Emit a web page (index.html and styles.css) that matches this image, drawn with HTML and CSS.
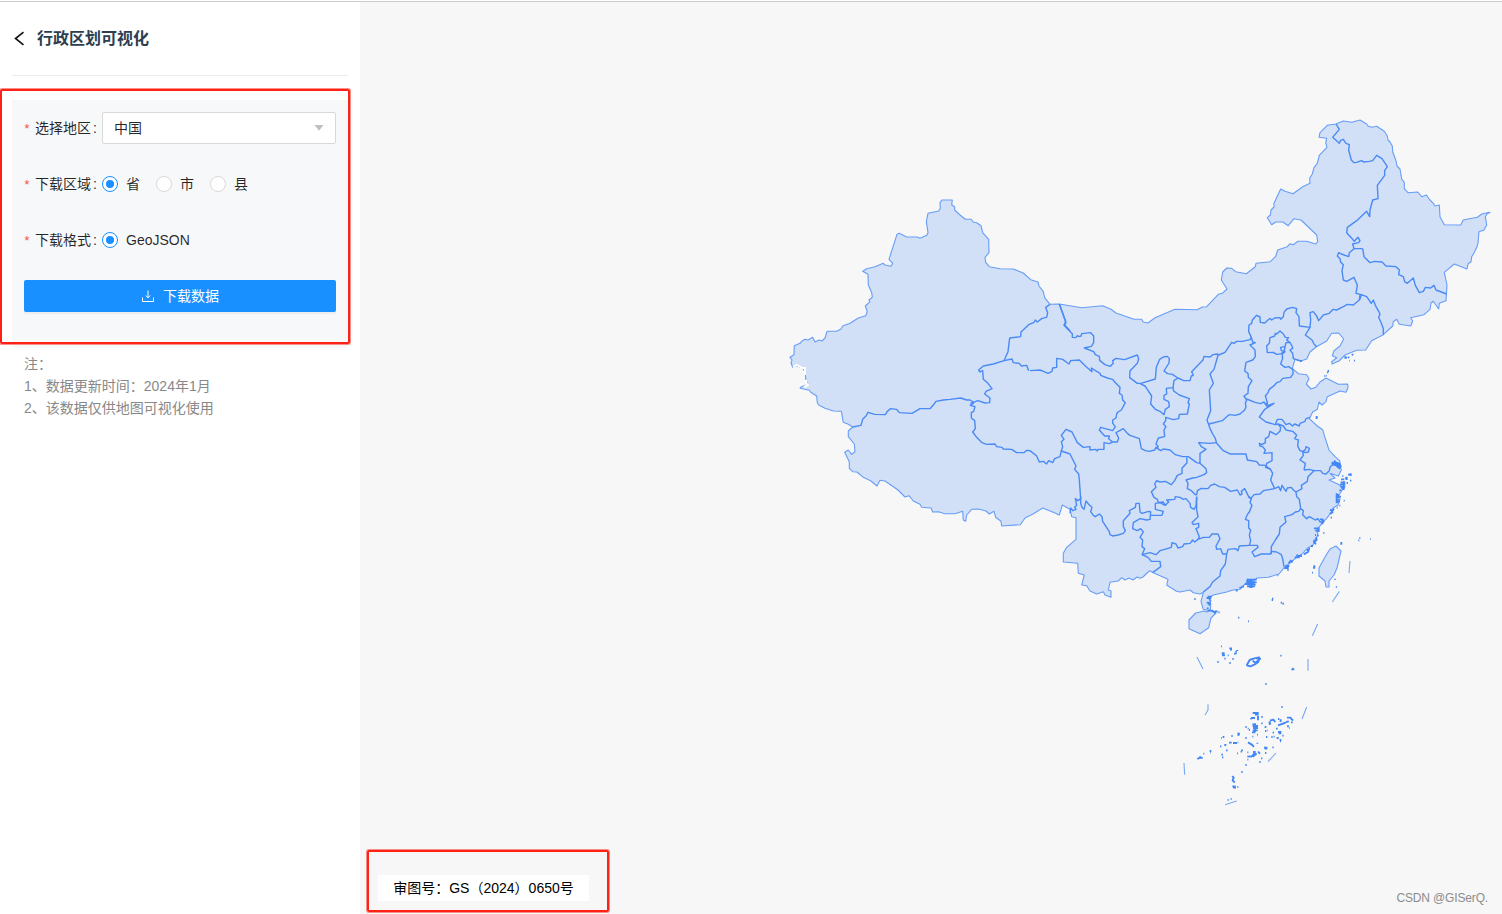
FILE: index.html
```html
<!DOCTYPE html>
<html lang="zh-CN">
<head>
    <meta charset="UTF-8">
    <meta name="viewport" content="width=device-width, initial-scale=1.0">
    <title>行政区划可视化</title>
    <link rel="stylesheet" href="styles.css">
</head>
<body>
    <div class="page">
        <aside class="sidebar">
            <div class="header">
                <svg class="back" width="12" height="16" viewBox="0 0 12 16"><path d="M10.500 1.200L2.500 7.500l8 6.300"/></svg>
                <h1>行政区划可视化</h1>
            </div>

            <form class="panel">
                <div class="row">
                    <label class="name">选择地区</label>
                    <div class="select">
                        <span>中国</span>
                        <svg width="10" height="6" viewBox="0 0 10 6"><path d="M.5 0h9L5 5.800z"/></svg>
                    </div>
                </div>
                <div class="row">
                    <label class="name">下载区域</label>
                    <label class="radio checked"><i></i><span>省</span></label>
                    <label class="radio"><i></i><span>市</span></label>
                    <label class="radio"><i></i><span>县</span></label>
                </div>
                <div class="row">
                    <label class="name">下载格式</label>
                    <label class="radio checked"><i></i><span>GeoJSON</span></label>
                </div>
                <button type="button" class="download">
                    <svg width="14" height="14" viewBox="0 0 14 14"><path d="M7 1.500v7M4.800 6.500L7 8.800l2.200-2.300M1.500 8.500v4h11v-4"/></svg>
                    <span>下载数据</span>
                </button>
            </form>

            <div class="notes">
                <p>注：</p>
                <p>1、数据更新时间：2024年1月</p>
                <p>2、该数据仅供地图可视化使用</p>
            </div>
        </aside>

        <main class="map">
            <svg class="china" width="1142" height="912" viewBox="360 2 1142 912">
                <!-- mainland -->
                <path class="land" d="M852.700 427L848.300 424.300 843.300 422.300 841.300 411.300 833.300 411 825 408.300 819 405.300 817.300 402.700 816.700 396 810.700 392.300 809.300 390.300 800 388.300 801 387 806 385 808 384 806 381 805 371.700 802.700 368.300 797.300 366 792.700 367.300 791 362.700 792 360 790 357.300 794 354.700 794.300 345.700 800 343.300 802 341 805 339.300 808 340 812.700 337.300 815 342 819 340 822 341 825 338 827 331.300 836.700 331.300 841 329 842.700 326 850 323.300 858.300 318 865.700 315.700 867.300 311.700 865.300 306 870 301.700 869 300 872.300 297.300 871.700 292.700 868.300 285 868 274.300 862.700 271.300 866.700 268.700 875 266.700 883.300 263.300 885 265 891 266.300 892.700 263.300 889 259.300 897 234.300 899.300 233.300 906.700 237 917.300 237 920 238.300 926.700 235.300 928 232.700 926.300 221.700 928 213.300 938.700 211 940.300 208.300 940 202.700 942 200 952.300 200 951.700 204.700 954.700 207 954.700 210 960 215 965.300 219.300 971.300 219.300 973 222 976.700 222.700 981 225.700 982.700 232.700 988.700 239.300 989 252.700 985 257.300 985.700 262.300 989.300 266.700 1000 268.700 1013.300 269 1023.300 273 1030.700 279.700 1038 282 1039 286 1043.300 291.700 1044.700 297.700 1050 304.300 1059.300 304 1081.700 307.700 1102.700 305.700 1111 309.300 1116 313 1134 319.300 1141.700 319.300 1143.300 322 1148 323 1155 317.700 1175 309.300 1197.300 309.700 1202.300 307 1206.700 306.700 1218.300 294.300 1222.300 293.300 1227 289 1221.300 280 1222.700 272 1226.700 268 1231.700 268.300 1235.700 271.700 1246.300 273.700 1255.300 266.700 1256 263.300 1270.300 261.700 1275.700 256.300 1277.700 250 1287.300 246.700 1290 243.700 1293.300 244.700 1298 241.300 1306.700 241.300 1315.700 244 1317.700 241.700 1316.700 235 1301 220 1294 218.700 1288.300 225.700 1282.700 222 1275.700 222 1271.700 224.700 1267.300 217.700 1270.300 215 1271 210 1274 207 1274 203.300 1280.700 189 1285 191.300 1293 193.700 1302.700 186.700 1310 183.300 1309.700 178.300 1312.300 174 1314 167.700 1317.300 163.300 1319.300 155.300 1327 147.300 1325.700 142.700 1326.700 138.300 1319 137.300 1320 132.700 1327.300 125.300 1336 124 1343.300 121 1351.700 122.300 1360 120 1366.700 124 1368 126 1371.700 127.300 1376.700 126.300 1384.300 131.300 1387.300 136 1388 140 1390 142 1392.300 146 1392.700 151.700 1396 160.700 1397 166 1400 169 1401.700 179 1404.300 182.300 1404.300 188.700 1408 192.700 1417.700 192 1421.700 196.700 1426.300 195 1430 200 1433.300 203.300 1435 206 1439.300 205 1440 216.700 1444.300 224.700 1460.700 225 1463.300 220 1468 219 1477.300 217.300 1482.300 213.700 1490 212.300 1487 214 1485.300 216.700 1486.700 225 1484 230 1479 231.700 1478 243 1477 246.700 1474 253 1471.700 256.700 1471 261.700 1468 264 1467 269 1454.300 264 1444.300 272.300 1447 285 1446 300.700 1439.300 303.300 1438.700 309 1433.300 301.300 1431 303 1430 309.300 1424 314.700 1410.700 317.700 1412.700 321 1410.700 326 1399.300 324.300 1396.700 319.300 1393.300 321.700 1392.700 326 1383.300 334.700 1371.700 340.700 1365.700 350 1356.700 350.300 1345 355 1339 361 1332 364 1331.700 361.700 1336.700 357.700 1332.300 355.700 1334 350.700 1340 346 1343.700 339 1338.700 333 1331.700 333.300 1326.700 341 1316 347 1310 352 1306.700 359 1300.700 361 1295 359.300 1292.300 368.300 1298.300 373.700 1306.700 374.700 1309 378.700 1306.300 384 1311 389 1315.700 387.300 1320 382 1326 378 1338.300 384.300 1347.700 384 1348 388 1346 392.300 1340 391 1327.300 396.700 1326 401.700 1322 405 1319 402 1318.300 405 1317.300 409.300 1312.700 412 1309.300 418.700 1317.300 426 1322.700 429.700 1324.700 436.700 1329 450 1335 456.700 1339.700 460.700 1341.300 470 1338.300 476 1330 473.300 1335 478 1329 480 1338.300 484.300 1343.300 488.300 1341 492 1338.700 495 1340 499 1338 505 1333 508 1331.700 511.700 1326.700 518.300 1322.700 522.700 1316.700 530 1318 535 1315 540 1313 545 1307.300 548.300 1302 554 1296.700 557.300 1290 563 1285 566.700 1279 574 1268.300 577.300 1257 578 1251.700 583.300 1246 583 1240 589.300 1233 590 1226.700 592 1213.300 595 1208.300 598.300 1211 601 1208 604 1210.700 606.700 1210 611 1203.300 609.300 1201 601.700 1203.300 592.300 1200 594 1193.300 592.700 1190 590 1180 592 1176 591 1166.700 585 1168 579.300 1153.300 572.700 1150 570.700 1147 573 1143 577 1140 578.300 1137 577 1133 580 1129 578 1125 580 1121.700 577.700 1118.300 581 1110 582.300 1108.300 590 1111 591 1111 597.300 1105 595 1103.300 591.700 1096.700 594 1090 591 1086.700 585.700 1081.700 585 1084.300 575 1078.300 573.300 1077.700 563.300 1063.300 562 1063.300 553.300 1066.700 547.300 1076 539.300 1076 517.700 1071.700 516.700 1070 509.300 1062.300 505 1059.300 515 1055 513 1042.700 508 1033 514 1025 518 1020.300 524.700 1001.700 526 1001 521.300 995.700 517.300 994 511.300 989.300 514 986 511 978.300 509 971.700 509.300 966.700 515 965.700 521.300 963.300 520 962.700 511.300 955 513.700 945 513.700 938.300 511.700 932.700 512 931 508 921.700 507.300 920 504.300 913.300 501 909 495.700 905 497 898 490 888.300 483.300 885 481 880 480.300 877 486 871 481 863.300 477.300 857 472 852.700 471.700 849.300 468.300 849.300 461.700 844.700 452.300 848.300 450 851.700 454.300 855 451.700 854.300 444 848.300 436.700 848.300 431z"/>
                <!-- unmarked stretch of the western edge -->
                <path class="gap" d="M793 367l4-2 5 3h3v7M806 380v3l2 2-4 2"/>

                <!-- Xinjiang -->
                <g class="borders" transform="translate(780 190) scale(.33333)">
                    <path d="M810 343L797 352 803 368 800 382 786 385 772 396 766 390 762 397 746 404 723 426 722 440 689 444 684 485 672 512 640 522 610 528 596 540 600 546 608 542 610 568 622 578 636 596 618 604 614 612 630 624 629 638 615 639 594 632 571 640"/>
                    <path d="M218 711L243 706 248 688 258 678 264 667 284 673 316 674 322 664 332 656 350 658 358 668 396 670 420 656 450 656 460 645 468 634 490 630 510 628 542 624 560 630 570 630 580 636"/>
                    <path d="M672 512L696 507 700 518 718 520 724 528 740 526 746 542"/>
                    <path d="M838 342L858 398 854 405 870 422"/>
                </g>

                <!-- Tibet -->
                <g class="borders" transform="translate(830 390) scale(.33333)">
                    <path d="M432 38L421 46 435 50 431 64 424 68 424 84 434 92 436 116 428 126 440 142 456 158 470 163 495 162 500 170 516 172 520 177 545 178 560 188 582 188 590 181 600 182"/>
                </g>

                <!-- Inner Mongolia, Gansu, Ningxia, Qinghai, Shaanxi, Shanxi -->
                <g class="borders" transform="translate(1030 280) scale(.33333)">
                    <path d="M88 72L107 124 102 136 127 161 127 172 137 173 142 167 146 170 153 168 155 161 182 158 191 168 191 188 184 199 163 204 191 215 196 224 208 229 209 241 225 254 241 259 250 250 248 242 258 235 284 239 322 225 326 237 322 250 300 273 299 293 322 310 333 310 376 297 379 262 389 238 400 231 412 229 418 236 417 249 402 273 413 281 427 283 444 294 461 302 480 302 484 288 490 286 485 275 519 240 522 229 540 231 549 224 562 222 566 225 585 217 605 187 612 190 620 184 637 184 660 179 664 172 656 155 657 135 665 130 667 120 680 106 690 111 691 127 704 129 720 115"/>
                    <path d="M330 311L345 318 352 328 365 348 362 372 376 388 390 394 402 404 406 388 418 380 416 365 402 358 402 346 410 342 409 325 429 323 432 302 444 294"/>
                    <path d="M429 323L431 333 448 345 478 356 474 368 478 372 472 402 448 403 446 416 430 419 407 412 407 422 400 432 408 440 402 450 404 470 385 474 378 492 385 500 378 506"/>
                    <path d="M0 272L30 270 42 275 54 280 66 274 68 264 80 262 80 235 98 238 117 252 122 242 148 240 166 258 186 275 184 264 210 280 212 286 232 294 248 298 254 306 270 322 268 340 276 345 278 360 286 368 274 390 264 396 260 402 258 414 248 420 248 430 256 440 248 452 212 442 208 450 224 468 238 468 236 476 248 486 238 491 222 488 222 508 204 508 202 513 196 508 180 510 180 500 160 502 142 488 126 456 108 448 94 466 102 478 94 485 98 500 94 512 90 530 74 536 68 548 56 542 50 552 40 544 28 546 20 528 0 512"/>
                    <path d="M94 513L120 522 138 558 134 568 146 582 148 600"/>
                    <path d="M248 486L262 486 266 474 258 458 280 446 292 460 300 466 328 476 334 506 346 512 358 514 374 510 378 502 392 512 400 507 420 510 436 524 458 530 475 530 500 548 510 550 510 520 528 508 514 500 506 488 540 490 560 488"/>
                    <path d="M565 222L560 240 552 268 540 282 550 310 538 330 542 392 531 420 540 445 548 462 556 475 560 490 580 512 600 522 648 522 652 540 680 545 688 555 705 556 720 568"/>
                    <path d="M537 432L577 422 595 406 600 404"/>
                </g>

                <!-- Northeast -->
                <g class="borders" transform="translate(1200 100) scale(.33333)">
                    <path d="M408 72L418 88 398 112 418 130 422 121 430 118 438 130 448 134 446 150 454 180 462 188 470 187 484 182 492 186 508 184 518 182 530 166 546 176 562 200 554 212 554 226 532 256 534 296 518 300 510 330 509 350 500 334 470 362 442 382 440 398 458 418 463 424 474 412 480 422 476 428 458 432 462 446 488 446"/>
                    <path d="M488 446L492 470 510 488 524 484 546 486 558 498 588 500 598 510 596 524 610 530 614 545 622 550 640 534 646 556 658 578 670 574 676 562 692 564 702 556 708 570 740 582"/>
                    <path d="M462 446L448 458 446 470 424 462 416 458 412 468 420 476 422 486 430 494 426 512 430 540 440 544 462 532 472 556 468 580 484 584 500 590 514 610 520 600 526 616 536 634 540 642 536 652 544 670 550 686 550 704M484 584L480 598"/>
                </g>

                <!-- Hebei, Beijing, Tianjin, Shandong, Henan -->
                <g class="borders" transform="translate(1230 290) scale(.33333)">
                    <path d="M120 85L125 90 134 84 150 83 152 88 160 80 162 67 170 57 188 52 200 56 198 68 207 80 208 108 240 112 242 90 240 68 250 65 260 78 266 92 280 75 298 70 305 62 310 58 320 60 340 50 352 43 370 45 388 30 390 14"/>
                    <path d="M240 112L226 135 246 150 252 162 260 170"/>
                    <path d="M64 142L68 156 76 158 60 165 75 180 76 200 68 210 48 217 44 243 54 250 55 262 66 272 55 290 54 310 42 318 50 330 46 340 48 350 44 360 30 372 15 376 0 374"/>
                    <path d="M50 327L75 337 92 341 102 336 108 345 112 338"/>
                    <path d="M190 250L182 262 158 265 150 275 140 278 132 287 118 298 114 308 106 318 112 338 110 348 132 340 104 358 88 381 108 396 136 404 144 402"/>
                    <path d="M136 404L142 388 156 388 168 404 178 400 188 408 194 402 208 408 210 400 225 394 228 386 240 382"/>
                    <path d="M150 123L140 132 136 130 134 138 120 143 118 160 110 168 112 188 130 187 140 193 158 191 165 185 154 182 152 172 165 170 168 158 180 158 170 150 176 143 166 142 160 132z"/>
                    <path d="M165 170L162 186 156 188 158 205 152 222 165 232 176 230 188 238 190 250M180 158L186 168 188 175 180 180 188 190 190 206 212 213"/>
                    <path d="M144 402L152 412 150 424 138 434 120 424 116 440 106 446 106 458 96 464 88 460 90 468 98 470 106 480 102 490 126 488 126 512 110 520 108 530"/>
                    <path d="M144 402L160 408 168 420 188 424 200 436 194 446 205 450 203 468 210 482 226 488 235 486 238 475 228 470 226 480 218 484 220 496 210 510 226 520 222 540"/>
                </g>

                <!-- Sichuan, Chongqing, Guizhou, Yunnan, Guangxi -->
                <g class="borders" transform="translate(1050 420) scale(.33333)">
                    <path d="M88 180L92 236 84 242 76 236 80 256 74 262 78 268 68 272 62 264 60 280"/>
                    <path d="M92 228L92 250 96 262 102 268 108 243 118 255 126 262 122 275 130 286 136 290 148 282 156 290 158 304 178 335 180 344 188 348 204 345 220 340 226 332 220 320 220 302 240 280 238 272 256 262 258 250 268 250 270 276 276 280 296 274 302 276 300 298 290 300 270 296 250 308 248 326 262 332 272 326 280 336 270 352 278 360 276 380 284 386 276 404 300 398 318 404 330 392 344 388 364 382 366 368 378 372 384 384 398 380 402 372 420 370 428 360 434 366 444 358"/>
                    <path d="M302 286L336 286 340 274 316 268 316 250 330 248 345 256"/>
                    <path d="M410 112L411 128 396 145 396 160 382 166 374 182 364 194 346 184 330 186 320 182 314 192 318 202 304 215 312 232 322 238 325 248 340 246 346 256 356 246 350 240 374 238 376 230 390 232 400 238 408 236 420 250 422 262 432 268 438 258 440 230"/>
                    <path d="M450 130L468 146 470 158 462 164 440 172 428 174 408 180 414 190 412 206 424 212 438 226"/>
                    <path d="M440 230L440 270 444 290 426 308 430 314 446 310 446 322 438 326 448 350 444 358 460 352 478 352 486 342 504 342 510 356 498 378 500 388 512 386 518 402 530 402 526 432 512 452 510 468 488 486 480 500 460 516"/>
                    <path d="M276 404L294 412 304 424 330 424 332 440 308 458"/>
                </g>

                <!-- South and east -->
                <g class="borders" transform="translate(1180 420) scale(.33333)">
                    <path d="M50 226L52 212 64 205 84 206 92 196 104 192 118 200 134 202 152 214 172 210 180 225 186 222 184 214 194 206 206 230 212 236 222 224 240 222 250 212 284 206"/>
                    <path d="M255 142L270 146 278 160 272 180 284 206"/>
                    <path d="M284 206L296 200 302 212 306 196 318 214 322 204 334 202 340 210 348 216 366 206 364 196 382 184 384 170 402 152 388 148 372 150"/>
                    <path d="M402 152L422 152 428 160 438 162 448 152 450 142 466 126"/>
                    <path d="M348 216L350 230 358 238 362 266 370 272 368 284 380 296 388 290 406 300 414 296 420 306 430 302"/>
                    <path d="M362 266L356 274 346 276 336 284 314 290 318 306 300 322 298 342 286 360 274 380 274 402"/>
                    <path d="M206 230L214 236 210 248 216 256 208 276 202 284 196 298 206 302 206 324 212 330 208 346 212 362 208 376"/>
                    <path d="M140 402L144 388 166 386 174 392 178 378 208 376 232 376 234 382 216 396 224 410 244 402 272 402 274 394 290 396 304 404 308 416 312 440"/>
                </g>

                <!-- Taiwan and Hainan -->
                <path class="land" d="M1336 546L1341 551 1337 568 1334 575 1329 581 1329 587 1326 587 1325 581 1319 576 1319 568 1325 557 1330 549zM1195.700 613L1204 611 1207 612 1210 610 1216 613 1211 618 1208.700 627.700 1200 633.700 1189 628.700 1189 620z"/>

                <g class="dashes" transform="translate(1170 580) scale(.33333)">
                    <path d="M508 34l-21 32M443 132l-16 35M414 237v35M410 381l-14 36M318 519l-24 26M200 663l-35 11M42 549l2 35M114 373v17l-9 15M81 231l18 36M540-57l-3 36"/>
                </g>

                <g class="islands" transform="translate(1170 580) scale(.33333)">
                    <path d="M229 3h10M225 12h28M231 19h24M235 7h20M245 0v20M113 50h12M115 70h8M110 85h6M134 94h9M145 97h4M73 57h4M306 56h4M305 60h4M332 68h4M337 71h5M204 113h4M234 124h3M153 199h3M155 220h9M156 226h9M160 217v12M178 205h8M180 209h6M142 246h4M163 236h4M178 249h4M187 237h4M192 221h8M196 215h5M202 210v3M173 226h3M331 227h4M364 268h9M367 266h4M286 312h4M334 381h4M498 21h2"/>
                    <path d="M231 254l8-14 14-5 14-3-2 14-12 8-12 5-10-3zM248 242l8 6 14-11M260 236h13"/>
                    <path d="M248 399h18M255 404h11M243 414h12M264 408v13M241 417l8-4M274 411h4M247 433h8M248 438h16M249 444h15M248 451h15M246 457h10M226 441h4M233 446h3M237 450h3M255 430v26M274 430h4M284 441h5M285 453h4M291 451h2M299 424v8l4-2M300 422l10-3 6 7M324 417h4M332 418v8M324 436l20-7 12-6M351 413h10l8 9M352 425h4M363 427h5M354 436v6M357 444h2M318 446h5M324 456h10M326 460h8M308 458h4M337 467h4M288 471h4M304 471h4M329 480h5M330 484h3M320 474h6M311 470h3M226 474h4M247 470h3M261 464h3M202 461h8M203 465h5M184 468h4M158 471h5M153 474h2M150 499h4M163 495h6M177 488h8M189 489h12M203 487h2M234 487l10 6 8 7M262 488v3M282 503h10M284 506h8M307 502h4M214 511h5M212 515h4M168 511h5M154 524h5M156 532h4M119 513h5M121 518h2M100 521h3M82 537l8-4 8 1M87 534l6-4M201 520h3M232 517h3M232 529l12 1 10-10 4 2-10 8M249 516h8M264 515l6 6M285 519h4M273 535h4M268 546h4M232 539h3M226 555h4M214 576h4M187 588l4 5-3 8 6 7M187 619h10M189 623h9M202 621h3M173 660h3M182 657h3"/>
                </g>

                <!-- east coast -->
                <g class="islands" transform="translate(1180 420) scale(.33333)">
                    <path d="M455 127l10 4 8 10 8 5M455 133l12-6 8 14M462 122l12 12 7 12M487 168h3M483 178h10M495 175h5M500 170v10M504 164h6M512 160v8M510 182h4M482 187h14M480 193h16M481 200h15M484 205h10M491 184v26M500 189h4M478 211h6M470 225h8M467 231h12M468 239h10M472 245h8M470 220v30M480 230h3M491 242h3M478 257h3M470 263h3M450 270h5M462 266l-6 8 2 6M449 280h6M452 293h4M420 298h8l2 8-6 6M402 325h14M406 332h10M416 322v14M405 345h3M411 347h5M408 352l2 8-8 6 6 6M430 339h3M400 362h5M404 371h5M393 378h6M385 386h5M380 390h6l-2 6-8 4-4 4M484 366v8M538 354h3M535 361h3M570 357h2M465 476v3M469 500v2M403 436v10M399 443h5M396 458h3M355 408h11M344 412h15M350 404l6 8M331 425h8M334 420l-8 10M316 438h12M313 444h13M322 450h4M292 466h3M200 479h30M199 487h31M202 494h25M206 500h13M213 476v28M167 512h6M178 503h6M184 500h8M80 534h14M88 540h4M80 548h8l4 8M84 572h12l12 8"/>
                </g>
                <g class="islands" transform="translate(1230 290) scale(.33333)">
                    <path d="M347 203h4M346 199v7M353 202h5M358 212h2M366 192l3 4M372 212h3M293 243h4M291 247h4M283 258h3M289 257h2M260 378v8M257 384h5M211 213h5M315 518l12 2 6 10M310 525h18"/>
                </g>
            </svg>

            <div class="approval">审图号：GS（2024）0650号</div>
            <div class="watermark">CSDN @GISerQ.</div>
        </main>
    </div>

    <div class="mark mark-form"></div>
    <div class="mark mark-approval"></div>
</body>
</html>
```
FILE: styles.css
```css
* { box-sizing: border-box; }
body {
    margin: 0;
    height: 914px;
    overflow: hidden;
    position: relative;
    background: #fff;
    color: rgba(0, 0, 0, 0.85);
    font: 14px/22px "Liberation Sans", "Noto Sans CJK SC", sans-serif;
}
.page {
    display: flex;
    height: 913px;
    margin-top: 1px;
    border-top: 1px solid #ccc;
}
.sidebar {
    width: 360px;
    flex: none;
    padding: 0 12px;
    background: #fff;
}
.header {
    display: flex;
    align-items: center;
    height: 74px;
    padding-left: 1px;
    border-bottom: 1px solid #ebebeb;
}
.back { fill: none; stroke: #111; stroke-width: 1.6; }
h1 {
    margin: 0 0 0 12px;
    font-size: 16px;
    line-height: 24px;
    color: #2c3e50;
}
.panel {
    height: 248px;
    margin-top: 24px;
    padding: 12px;
    background: #f7f8fa;
}
.row {
    display: flex;
    align-items: center;
    height: 32px;
    margin-bottom: 24px;
}
.name { width: 78px; flex: none; white-space: nowrap; }
.name::before {
    content: "*";
    display: inline-block;
    width: 7px;
    margin-right: 4px;
    color: #ff4d4f;
    font-family: "Liberation Mono", monospace;
    font-size: 13px;
    line-height: 1;
    text-indent: -1px;
}
.name::after { content: ":"; margin-left: 2px; }
.select {
    display: flex;
    flex: 1;
    align-items: center;
    justify-content: space-between;
    height: 32px;
    padding: 0 11px;
    border: 1px solid #d9d9d9;
    border-radius: 2px;
    background: #fff;
}
.select svg { fill: #bfbfbf; }
.radio { display: flex; align-items: center; margin-right: 16px; }
.radio i {
    width: 16px;
    height: 16px;
    margin-right: 8px;
    padding: 3px;
    border: 1px solid #d9d9d9;
    border-radius: 50%;
    background: #fff;
}
.checked i { border-color: #1890ff; }
.checked i::before {
    content: "";
    display: block;
    width: 8px;
    height: 8px;
    border-radius: 50%;
    background: #1890ff;
}
.download {
    display: flex;
    align-items: center;
    justify-content: center;
    gap: 8px;
    width: 100%;
    height: 32px;
    border: 0;
    border-radius: 2px;
    background: #1890ff;
    color: #fff;
    font: inherit;
    box-shadow: 0 2px 0 rgba(0, 0, 0, 0.045);
}
.download svg { fill: none; stroke: #fff; stroke-width: 1; }
.notes { padding: 5px 12px; color: #888; }
.notes p { margin: 0; }

.map {
    position: relative;
    flex: 1;
    background: #f7f7f7;
}
.china { display: block; }
.china path { vector-effect: non-scaling-stroke; stroke-linejoin: round; }
.land { fill: #d2e0f7; stroke: #679df7; stroke-width: 1.1; }
.gap { fill: none; stroke: #fff; stroke-width: 2; }
.borders { fill: none; stroke: #4a8af5; stroke-width: 1.4; }
.dashes { fill: none; stroke: #78a8f7; stroke-width: 1.1; }
.islands { fill: none; stroke: #4387f5; stroke-width: 1.9; }
.approval {
    position: absolute;
    left: 18px;
    bottom: 13px;
    width: 211px;
    height: 26px;
    line-height: 26px;
    text-align: center;
    white-space: nowrap;
    background: #fff;
    color: #000;
}
.watermark {
    position: absolute;
    right: 14px;
    bottom: 5px;
    color: #8c8c8c;
    font-size: 12px;
    letter-spacing: -0.15px;
}

/* highlight frames */
.mark {
    position: absolute;
    border: 2px solid #fe2116;
    border-radius: 2px;
    box-shadow: 0 0 0 1px rgba(254, 33, 22, 0.5);
}
.mark-form { left: 0; top: 89px; width: 350px; height: 255px; }
.mark-approval { left: 367px; top: 850px; width: 242px; height: 62px; }
```
